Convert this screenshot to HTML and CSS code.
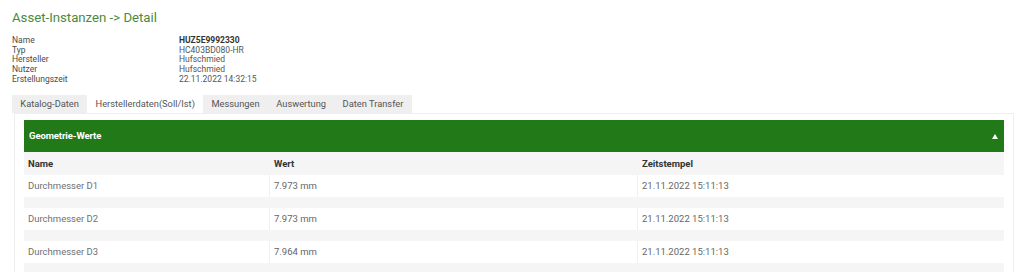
FILE: index.html
```html
<!DOCTYPE html>
<html lang="de">
<head>
<meta charset="utf-8">
<title>Asset-Instanzen Detail</title>
<link rel="stylesheet" href="styles.css">
</head>
<body>
<div class="page">
  <h1 class="title">Asset-Instanzen -&gt; Detail</h1>
  <dl class="info">
    <dt>Name</dt><dd class="strong">HUZ5E9992330</dd>
    <dt>Typ</dt><dd>HC403BD080-HR</dd>
    <dt>Hersteller</dt><dd>Hufschmied</dd>
    <dt>Nutzer</dt><dd>Hufschmied</dd>
    <dt>Erstellungszeit</dt><dd>22.11.2022 14:32:15</dd>
  </dl>
  <div class="tabs">
    <span class="tab">Katalog-Daten</span>
    <span class="tab active">Herstellerdaten(Soll/Ist)</span>
    <span class="tab">Messungen</span>
    <span class="tab">Auswertung</span>
    <span class="tab">Daten Transfer</span>
  </div>
  <div class="panel">
    <div class="panel-head">
      <span>Geometrie-Werte</span>
      <span class="caret"></span>
    </div>
    <div class="table">
      <div class="row head">
        <div class="cell">Name</div>
        <div class="cell">Wert</div>
        <div class="cell">Zeitstempel</div>
      </div>
      <div class="row">
        <div class="cell name">Durchmesser D1</div>
        <div class="cell">7.973 mm</div>
        <div class="cell">21.11.2022 15:11:13</div>
      </div>
      <div class="spacer"></div>
      <div class="row">
        <div class="cell name">Durchmesser D2</div>
        <div class="cell">7.973 mm</div>
        <div class="cell">21.11.2022 15:11:13</div>
      </div>
      <div class="spacer"></div>
      <div class="row">
        <div class="cell name">Durchmesser D3</div>
        <div class="cell">7.964 mm</div>
        <div class="cell">21.11.2022 15:11:13</div>
      </div>
      <div class="spacer"></div>
    </div>
  </div>
</div>
</body>
</html>
```

FILE: styles.css
```css
* { box-sizing: border-box; }
html, body { margin: 0; padding: 0; background: #fff; }
body {
  font-family: Roboto, "Liberation Sans", sans-serif;
  color: #444;
  width: 1024px;
  height: 272px;
  overflow: hidden;
}
.page {
  padding: 8px 10px 0 12px;
}
.title {
  margin: 0;
  font-size: 13.2px;
  line-height: 20px;
  font-weight: 400;
  color: #4b8a3c;
}
.info {
  margin: 8px 0 0 0;
  display: grid;
  grid-template-columns: 167px auto;
  font-size: 8.5px;
  line-height: 9.7px;
}
.info dt { color: #4a4a4a; }
.info dd { margin: 0; color: #555; }
.info dd.strong { font-weight: 700; color: #333; }
.tabs {
  margin-top: 10px;
  display: inline-flex;
  height: 18px;
  background: #efefef;
  font-size: 9.3px;
  color: #555;
  white-space: nowrap;
}
.tab {
  padding: 0 8.3px;
  display: flex;
  align-items: center;
}
.tab.active { background: #fff; }
.panel {
  margin-left: 2px;
  border: 1px solid #eeeeee;
  border-bottom: none;
  padding: 6px 9px 0 9px;
  height: 170px;
}
.panel-head {
  height: 32px;
  background: #217a17;
  color: #fff;
  font-size: 9.5px;
  font-weight: 700;
  display: flex;
  align-items: center;
  justify-content: space-between;
  padding: 0 6px 0 5px;
  letter-spacing: -0.1px;
}
.caret {
  width: 0;
  height: 0;
  border-left: 3.5px solid transparent;
  border-right: 3.5px solid transparent;
  border-bottom: 5px solid #fff;
  margin-top: 1px;
}
.table { font-size: 9.5px; }
.row {
  display: grid;
  grid-template-columns: 245px 368px 1fr;
  height: 22px;
  background: #fff;
}
.row.head {
  height: 23px;
  background: #f5f5f5;
  font-weight: 700;
  color: #333;
}
.cell {
  display: flex;
  align-items: center;
  padding-left: 4px;
  color: #666;
  border-left: 1px solid #f0f0f0;
}
.cell:first-child { border-left: none; }
.row.head .cell { color: #333; border-left-color: #f5f5f5; }
.cell.name { color: #707070; }
.spacer {
  height: 11px;
  background: #f5f5f5;
}
```
